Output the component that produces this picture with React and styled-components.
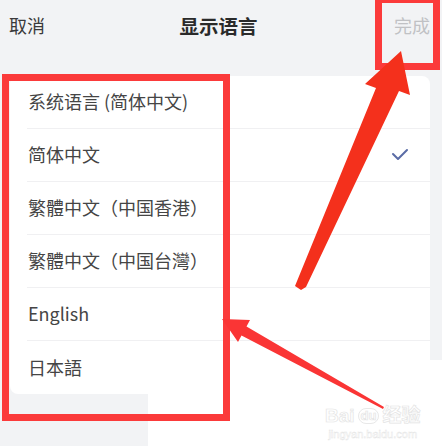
import React from 'react';
import styled, { createGlobalStyle } from 'styled-components';

const Global = createGlobalStyle`
  html, body { margin: 0; padding: 0; }
  body {
    background: #f2f3f5;
    font-family: "Noto Sans CJK SC", "Noto Sans", sans-serif;
  }
`;

const languages = [
  { name: '系统语言 (简体中文)' },
  { name: '简体中文', checked: true },
  { name: '繁體中文（中国香港）' },
  { name: '繁體中文（中国台灣）' },
  { name: 'English' },
  { name: '日本語' },
];

const App = () => {
  return (
    <Screen>
      <Global />
      <Header>
        <HeaderButton>取消</HeaderButton>
        <Title>显示语言</Title>
        <HeaderButton muted>完成</HeaderButton>
      </Header>
      <Card>
        {languages.map((lang, i) => (
          <Row key={lang.name} last={i === languages.length - 1}>
            <Label>{lang.name}</Label>
            {lang.checked && (
              <svg width="18" height="14" viewBox="0 0 18 14">
                <polyline points="2,6 7,11 16,2" fill="none" stroke="#5a6ca6" strokeWidth="2" strokeLinecap="round" strokeLinejoin="round" />
              </svg>
            )}
          </Row>
        ))}
      </Card>
      <Patch>
        <Watermark>
          <Brand>Bai<Paw>du</Paw>经验</Brand>
          <Url>jingyan.baidu.com</Url>
        </Watermark>
      </Patch>
      <Frame left={2} top={74} width={228} height={347} />
      <Frame left={375} top={-4} width={65} height={74} />
      <Arrows width="442" height="446" viewBox="0 0 442 446">
        <polygon
          fill="#f4301c"
          points="401,51 410,95 399,91 306,287 301,290 295,286 376,88 365,84"
        />
        <polygon
          fill="#fa3535"
          points="222,319 250,320 246.5,326.5 384,407 383,409 241.5,335.5 238,342"
        />
      </Arrows>
    </Screen>
  );
};

const Screen = styled.div`
  position: relative;
  width: 442px;
  height: 446px;
  overflow: hidden;
  background: #f2f3f5;
`;

const Header = styled.div`
  height: 50px;
  display: grid;
  grid-template-columns: 1fr auto 1fr;
  align-items: center;
  padding: 0 10px 0 9px;
`;

const HeaderButton = styled.div`
  font-size: 18px;
  color: ${p => (p.muted ? '#c0c1c4' : '#3a3a3a')};
  justify-self: ${p => (p.muted ? 'end' : 'start')};
  margin-right: ${p => (p.muted ? '2px' : '0')};
`;

const Title = styled.div`
  font-size: 19.5px;
  font-weight: 600;
  color: #2a2a2a;
  margin-right: 4px;
`;

const Card = styled.div`
  margin: 26px 12px 0 10px;
  background: #fff;
  border-radius: 8px;
`;

const Row = styled.div`
  height: 53px;
  box-sizing: border-box;
  margin-left: 17px;
  padding: 0 21px 0 1px;
  display: flex;
  align-items: center;
  justify-content: space-between;
  border-bottom: ${p => (p.last ? 'none' : '1px solid #f0f0f2')};
`;

const Label = styled.span`
  font-size: 18px;
  color: #454545;
  margin-top: -2px;
`;

const Patch = styled.div`
  position: absolute;
  left: 148px;
  top: 360px;
  right: 0;
  bottom: 0;
  background: #fff;
`;

const Watermark = styled.div`
  position: absolute;
  left: 177px;
  top: 45px;
  display: flex;
  flex-direction: column;
  align-items: center;
  font-family: "Liberation Sans", "Noto Sans CJK SC", sans-serif;
  color: #fff;
  -webkit-text-stroke: 0.7px #e4e4e4;
`;

const Brand = styled.div`
  font-size: 19px;
  font-weight: 700;
  line-height: 22px;
  display: flex;
  align-items: center;
`;

const Paw = styled.span`
  font-size: 13px;
  margin: 0 3px;
  padding: 0 2px;
  border: 1px solid #e8e8e8;
  border-radius: 8px;
  line-height: 14px;
`;

const Url = styled.div`
  font-size: 11px;
  line-height: 14px;
  -webkit-text-stroke: 0.4px #e4e4e4;
`;

const Frame = styled.div`
  position: absolute;
  left: ${p => p.left}px;
  top: ${p => p.top}px;
  width: ${p => p.width}px;
  height: ${p => p.height}px;
  box-sizing: border-box;
  border: 7px solid #fb3a3a;
`;

const Arrows = styled.svg`
  position: absolute;
  left: 0;
  top: 0;
  pointer-events: none;
`;

export default App;
